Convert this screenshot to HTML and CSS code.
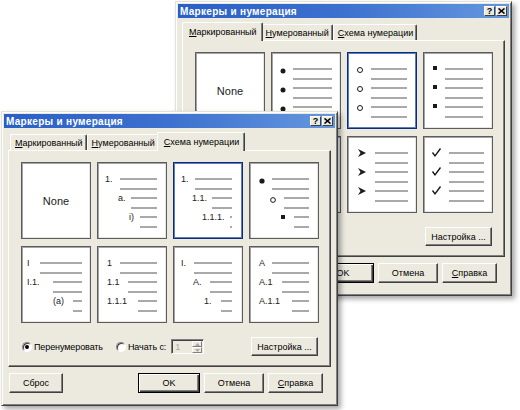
FILE: index.html
```html
<!DOCTYPE html>
<html lang="ru">
<head>
<meta charset="utf-8">
<title>Маркеры и нумерация</title>
<link rel="stylesheet" href="styles.css">
</head>
<body>

<!-- Back dialog: bulleted tab -->
<div class="win back">
  <div class="titlebar">
    <span class="title">Маркеры и нумерация</span>
    <span class="tbtns">
      <span class="tbtn">?</span>
      <span class="tbtn"><svg width="7" height="6" viewBox="0 0 7 6"><path d="M0.5 0.5 L6.5 5.5 M6.5 0.5 L0.5 5.5" stroke="#000" stroke-width="1.6"/></svg></span>
    </span>
  </div>
  <div class="tabs">
    <span class="tab sel"><u>М</u>аркированный</span>
    <span class="tab"><u>Н</u>умерованный</span>
    <span class="tab"><u>С</u>хема нумерации</span>
  </div>
  <div class="panel">
    <div class="grid">
      <div class="cell none">None</div>
      <div class="cell">
        <svg class="pv" width="68" height="75" viewBox="0 0 68 75">
          <circle class="dot" cx="11" cy="18" r="2.5"/><line x1="21" y1="16" x2="60" y2="16"/><line x1="21" y1="26" x2="60" y2="26"/>
          <circle class="dot" cx="11" cy="37" r="2.5"/><line x1="21" y1="35" x2="60" y2="35"/><line x1="21" y1="45" x2="60" y2="45"/>
          <circle class="dot" cx="11" cy="56" r="2.5"/><line x1="21" y1="54" x2="60" y2="54"/><line x1="21" y1="64" x2="60" y2="64"/>
        </svg>
      </div>
      <div class="cell sel">
        <svg class="pv" width="68" height="75" viewBox="0 0 68 75">
          <circle class="ring" cx="12" cy="17" r="2.5"/><line x1="23" y1="16" x2="59" y2="16"/><line x1="23" y1="26" x2="59" y2="26"/>
          <circle class="ring" cx="12" cy="36" r="2.5"/><line x1="23" y1="35" x2="59" y2="35"/><line x1="23" y1="45" x2="59" y2="45"/>
          <circle class="ring" cx="12" cy="55" r="2.5"/><line x1="23" y1="54" x2="59" y2="54"/><line x1="23" y1="64" x2="59" y2="64"/>
        </svg>
      </div>
      <div class="cell">
        <svg class="pv" width="68" height="75" viewBox="0 0 68 75">
          <rect class="sq" x="9" y="13" width="4" height="4"/><line x1="21" y1="16" x2="59" y2="16"/><line x1="21" y1="26" x2="59" y2="26"/>
          <rect class="sq" x="9" y="32" width="4" height="4"/><line x1="21" y1="35" x2="59" y2="35"/><line x1="21" y1="45" x2="59" y2="45"/>
          <rect class="sq" x="9" y="51" width="4" height="4"/><line x1="21" y1="54" x2="59" y2="54"/><line x1="21" y1="64" x2="59" y2="64"/>
        </svg>
      </div>
      <div class="cell">
        <svg class="pv" width="68" height="75" viewBox="0 0 68 75">
          <path class="dot" d="M11 13 L14 16 L11 19 L8 16 Z"/><line x1="21" y1="16" x2="59" y2="16"/><line x1="21" y1="26" x2="59" y2="26"/>
          <path class="dot" d="M11 32 L14 35 L11 38 L8 35 Z"/><line x1="21" y1="35" x2="59" y2="35"/><line x1="21" y1="45" x2="59" y2="45"/>
          <path class="dot" d="M11 51 L14 54 L11 57 L8 54 Z"/><line x1="21" y1="54" x2="59" y2="54"/><line x1="21" y1="64" x2="59" y2="64"/>
        </svg>
      </div>
      <div class="cell">
        <svg class="pv" width="68" height="75" viewBox="0 0 68 75">
          <path class="dot" d="M11 12 L15 16 L11 20 L7 16 Z"/><line x1="21" y1="16" x2="59" y2="16"/><line x1="21" y1="26" x2="59" y2="26"/>
          <path class="dot" d="M11 31 L15 35 L11 39 L7 35 Z"/><line x1="21" y1="35" x2="59" y2="35"/><line x1="21" y1="45" x2="59" y2="45"/>
          <path class="dot" d="M11 50 L15 54 L11 58 L7 54 Z"/><line x1="21" y1="54" x2="59" y2="54"/><line x1="21" y1="64" x2="59" y2="64"/>
        </svg>
      </div>
      <div class="cell">
        <svg class="pv" width="68" height="75" viewBox="0 0 68 75">
          <path class="dot" d="M10 12 L18 16 L10 20 L12.5 16 Z"/><line x1="27" y1="16" x2="60" y2="16"/><line x1="27" y1="26" x2="60" y2="26"/>
          <path class="dot" d="M10 31 L18 35 L10 39 L12.5 35 Z"/><line x1="27" y1="35" x2="60" y2="35"/><line x1="27" y1="45" x2="60" y2="45"/>
          <path class="dot" d="M10 50 L18 54 L10 58 L12.5 54 Z"/><line x1="27" y1="54" x2="60" y2="54"/><line x1="27" y1="64" x2="60" y2="64"/>
        </svg>
      </div>
      <div class="cell">
        <svg class="pv" width="68" height="75" viewBox="0 0 68 75">
          <path class="chk" d="M8.5 15.5 L11 19 L16.5 11.5"/><line x1="25" y1="16" x2="60" y2="16"/><line x1="25" y1="26" x2="60" y2="26"/>
          <path class="chk" d="M8.5 34.5 L11 38 L16.5 30.5"/><line x1="25" y1="35" x2="60" y2="35"/><line x1="25" y1="45" x2="60" y2="45"/>
          <path class="chk" d="M8.5 53.5 L11 57 L16.5 49.5"/><line x1="25" y1="54" x2="60" y2="54"/><line x1="25" y1="64" x2="60" y2="64"/>
        </svg>
      </div>
    </div>
    <div class="opts">
      <span class="btn b-setup">Настройка ...</span>
    </div>
  </div>
  <div class="footer">
    <span class="btn b-reset">Сброс</span>
    <span class="btn def b-ok">OK</span>
    <span class="btn b-cancel">Отмена</span>
    <span class="btn b-help"><u>С</u>правка</span>
  </div>
</div>

<!-- Front dialog: outline numbered tab -->
<div class="win front">
  <div class="titlebar">
    <span class="title">Маркеры и нумерация</span>
    <span class="tbtns">
      <span class="tbtn">?</span>
      <span class="tbtn"><svg width="7" height="6" viewBox="0 0 7 6"><path d="M0.5 0.5 L6.5 5.5 M6.5 0.5 L0.5 5.5" stroke="#000" stroke-width="1.6"/></svg></span>
    </span>
  </div>
  <div class="tabs">
    <span class="tab"><u>М</u>аркированный</span>
    <span class="tab"><u>Н</u>умерованный</span>
    <span class="tab sel"><u>С</u>хема нумерации</span>
  </div>
  <div class="panel">
    <div class="grid">
      <div class="cell none">None</div>
      <div class="cell">
        <svg class="pv" width="68" height="75" viewBox="0 0 68 75">
          <text x="7" y="19">1.</text><line x1="22" y1="16" x2="59" y2="16"/><line x1="22" y1="26" x2="59" y2="26"/>
          <text x="20" y="38">a.</text><line x1="33" y1="35" x2="59" y2="35"/><line x1="33" y1="45" x2="59" y2="45"/>
          <text x="31" y="57">i)</text><line x1="42" y1="54" x2="59" y2="54"/><line x1="42" y1="64" x2="59" y2="64"/>
        </svg>
      </div>
      <div class="cell sel">
        <svg class="pv" width="68" height="75" viewBox="0 0 68 75">
          <text x="7" y="19">1.</text><line x1="21" y1="16" x2="58" y2="16"/><line x1="21" y1="26" x2="58" y2="26"/>
          <text x="18" y="38">1.1.</text><line x1="38" y1="35" x2="58" y2="35"/><line x1="38" y1="45" x2="58" y2="45"/>
          <text x="28" y="57">1.1.1.</text><line x1="56" y1="54" x2="58" y2="54"/><line x1="56" y1="64" x2="58" y2="64"/>
        </svg>
      </div>
      <div class="cell">
        <svg class="pv" width="68" height="75" viewBox="0 0 68 75">
          <circle class="dot" cx="12" cy="18" r="2.6"/><line x1="22" y1="16" x2="59" y2="16"/><line x1="22" y1="26" x2="59" y2="26"/>
          <circle class="ring" cx="23" cy="37" r="2.4"/><line x1="34" y1="35" x2="59" y2="35"/><line x1="34" y1="45" x2="59" y2="45"/>
          <rect class="sq" x="31" y="52" width="4" height="4"/><line x1="44" y1="54" x2="59" y2="54"/><line x1="44" y1="64" x2="59" y2="64"/>
        </svg>
      </div>
      <div class="cell">
        <svg class="pv" width="68" height="75" viewBox="0 0 68 75">
          <text x="5" y="19">I</text><line x1="18" y1="16" x2="60" y2="16"/><line x1="18" y1="26" x2="60" y2="26"/>
          <text x="5" y="38">I.1.</text><line x1="31" y1="35" x2="60" y2="35"/><line x1="31" y1="45" x2="60" y2="45"/>
          <text x="31" y="57">(a)</text><line x1="51" y1="54" x2="60" y2="54"/><line x1="51" y1="64" x2="60" y2="64"/>
        </svg>
      </div>
      <div class="cell">
        <svg class="pv" width="68" height="75" viewBox="0 0 68 75">
          <text x="9" y="19">1</text><line x1="22" y1="16" x2="59" y2="16"/><line x1="22" y1="26" x2="59" y2="26"/>
          <text x="9" y="38">1.1</text><line x1="30" y1="35" x2="59" y2="35"/><line x1="30" y1="45" x2="59" y2="45"/>
          <text x="9" y="57">1.1.1</text><line x1="40" y1="54" x2="59" y2="54"/><line x1="40" y1="64" x2="59" y2="64"/>
        </svg>
      </div>
      <div class="cell">
        <svg class="pv" width="68" height="75" viewBox="0 0 68 75">
          <text x="7" y="19">I.</text><line x1="20" y1="16" x2="58" y2="16"/><line x1="20" y1="26" x2="58" y2="26"/>
          <text x="19" y="38">A.</text><line x1="36" y1="35" x2="58" y2="35"/><line x1="36" y1="45" x2="58" y2="45"/>
          <text x="30" y="57">1.</text><line x1="47" y1="54" x2="58" y2="54"/><line x1="47" y1="64" x2="58" y2="64"/>
        </svg>
      </div>
      <div class="cell">
        <svg class="pv" width="68" height="75" viewBox="0 0 68 75">
          <text x="9" y="19">A</text><line x1="22" y1="16" x2="59" y2="16"/><line x1="22" y1="26" x2="59" y2="26"/>
          <text x="9" y="38">A.1</text><line x1="32" y1="35" x2="59" y2="35"/><line x1="32" y1="45" x2="59" y2="45"/>
          <text x="9" y="57">A.1.1</text><line x1="42" y1="54" x2="59" y2="54"/><line x1="42" y1="64" x2="59" y2="64"/>
        </svg>
      </div>
    </div>
    <div class="opts">
      <span class="radio on"></span>
      <span class="rlabel">Перенумеровать</span>
      <span class="radio r2"></span>
      <span class="rlabel">Начать с:</span>
      <span class="spin">
        <span class="val">1</span>
        <span class="arrows">
          <span><svg width="5" height="3" viewBox="0 0 5 3"><path d="M0 3 L2.5 0 L5 3 Z" fill="#a8a8a8"/></svg></span>
          <span><svg width="5" height="3" viewBox="0 0 5 3"><path d="M0 0 L2.5 3 L5 0 Z" fill="#a8a8a8"/></svg></span>
        </span>
      </span>
      <span class="btn b-setup">Настройка ...</span>
    </div>
  </div>
  <div class="footer">
    <span class="btn b-reset">Сброс</span>
    <span class="btn def b-ok">OK</span>
    <span class="btn b-cancel">Отмена</span>
    <span class="btn b-help"><u>С</u>правка</span>
  </div>
</div>

</body>
</html>
```

FILE: styles.css
```css
* { box-sizing: border-box; }

html, body {
  margin: 0;
  padding: 0;
  background: #fff;
}

body {
  width: 520px;
  height: 410px;
  position: relative;
  overflow: hidden;
  font-family: "Liberation Sans", Arial, sans-serif;
  font-size: 9px;
  color: #000;
}

u { text-decoration: underline; text-underline-offset: 1px; }

/* window frame */
.win {
  position: absolute;
  width: 337px;
  background: #eceadf;
  border: 1px solid;
  border-color: #e4e2d8 #404040 #404040 #e4e2d8;
  box-shadow: inset 1px 1px 0 #fff, inset -1px -1px 0 #808080, 3px 3px 5px rgba(0, 0, 0, 0.35);
  padding: 2px 2px 12px;
}
.win.back { left: 175px; top: 1px; }
.win.front { left: 1px; top: 111px; }

.titlebar {
  height: 14px;
  display: flex;
  align-items: center;
  justify-content: space-between;
  background: linear-gradient(90deg, #2a5fc7 0%, #3c71cf 50%, #6597de 100%);
  color: #fff;
  padding: 0 2px 0 2px;
}
.title {
  font-weight: bold;
  font-size: 10px;
  letter-spacing: 0.3px;
}
.tbtns { display: flex; gap: 1px; }
.tbtn {
  width: 11px;
  height: 10px;
  background: #eceadf;
  border: 1px solid;
  border-color: #fff #404040 #404040 #fff;
  display: flex;
  align-items: center;
  justify-content: center;
  color: #000;
  font-weight: bold;
  font-size: 9px;
  line-height: 1;
}

/* tabs */
.tabs {
  display: flex;
  align-items: flex-end;
  height: 22px;
  padding-left: 6px;
}
.tab {
  height: 16px;
  padding: 0 3px 0 4px;
  display: flex;
  align-items: center;
  border-top: 1px solid #fff;
  border-left: 1px solid #fff;
  border-right: 1px solid #404040;
  box-shadow: inset -1px 0 0 #808080;
  border-radius: 2px 2px 0 0;
  position: relative;
  white-space: nowrap;
}
.tab.sel {
  height: 19px;
  margin: 0 -2px -1px;
  padding: 0 5px 1px 6px;
  z-index: 1;
  background: #eceadf;
}

/* tab panel */
.panel {
  margin: 0 4px;
  border: 1px solid;
  border-color: #fff #404040 #404040 #fff;
  box-shadow: inset -1px -1px 0 #808080;
  padding: 11px 10px 10px 12px;
}
.grid {
  display: grid;
  grid-template-columns: repeat(4, 70px);
  grid-auto-rows: 77px;
  column-gap: 6px;
  row-gap: 7px;
}
.cell {
  background: #fff;
  border: 1px solid #5c5c5c;
  box-shadow: inset 1px 1px 0 #a4a4a4, inset -1px -1px 0 #e6e6e6;
}
.cell.sel {
  border-color: #0d2a74;
  box-shadow: inset 0 0 0 1px #5d7cc2;
}
.cell.none {
  display: flex;
  align-items: center;
  justify-content: center;
  font-size: 11px;
  color: #1a1a1a;
}
.pv { display: block; }
.pv line { stroke: #a9a9a9; stroke-width: 2; }
.pv text {
  font-family: "Liberation Sans", Arial, sans-serif;
  font-size: 9px;
  fill: #222;
}
.pv .dot, .pv .sq { fill: #1a1a1a; }
.pv .ring { fill: none; stroke: #1a1a1a; stroke-width: 1; }
.pv .chk { fill: none; stroke: #111; stroke-width: 1.3; }

/* options row */
.opts {
  display: flex;
  align-items: center;
  height: 19px;
  margin-top: 14px;
}
.radio {
  width: 10px;
  height: 10px;
  border-radius: 50%;
  background: #fff;
  border: 1px solid;
  border-color: #808080 #fff #fff #808080;
  box-shadow: inset 1px 1px 0 #404040;
  margin-left: 1px;
  display: flex;
  align-items: center;
  justify-content: center;
}
.radio.on::after {
  content: "";
  width: 4px;
  height: 4px;
  border-radius: 50%;
  background: #000;
}
.radio.r2 { margin-left: 13px; }
.rlabel { margin-left: 2px; white-space: nowrap; letter-spacing: -0.1px; }
.spin {
  margin-left: 5px;
  width: 33px;
  height: 15px;
  display: flex;
  border: 1px solid;
  border-color: #808080 #fff #fff #808080;
  box-shadow: inset 1px 1px 0 #404040;
  background: #eceadf;
}
.spin .val {
  flex: 1;
  color: #a8a8a8;
  padding: 2px 0 0 3px;
  line-height: 10px;
}
.spin .arrows {
  width: 11px;
  display: flex;
  flex-direction: column;
  padding: 1px 1px 0 0;
}
.spin .arrows span {
  flex: 1;
  border: 1px solid;
  border-color: #fff #808080 #808080 #fff;
  display: flex;
  align-items: center;
  justify-content: center;
}

/* buttons */
.btn {
  height: 19px;
  display: flex;
  align-items: center;
  justify-content: center;
  border: 1px solid;
  border-color: #fff #404040 #404040 #fff;
  box-shadow: inset -1px -1px 0 #808080;
  background: #eceadf;
  white-space: nowrap;
}
.btn.def {
  border-color: #000;
  box-shadow: inset 1px 1px 0 #fff, inset -1px -1px 0 #404040, inset -2px -2px 0 #808080;
}
.b-setup {
  width: 67px;
  margin-left: auto;
  margin-right: 2px;
}

.footer {
  display: flex;
  margin-top: 6px;
  padding: 0 12px 0 5px;
}
.footer .btn { height: 20px; }
.b-reset { width: 54px; }
.b-ok { width: 62px; margin-left: auto; }
.b-cancel { width: 60px; margin-left: 4px; }
.b-help { width: 55px; margin-left: 4px; }
```
